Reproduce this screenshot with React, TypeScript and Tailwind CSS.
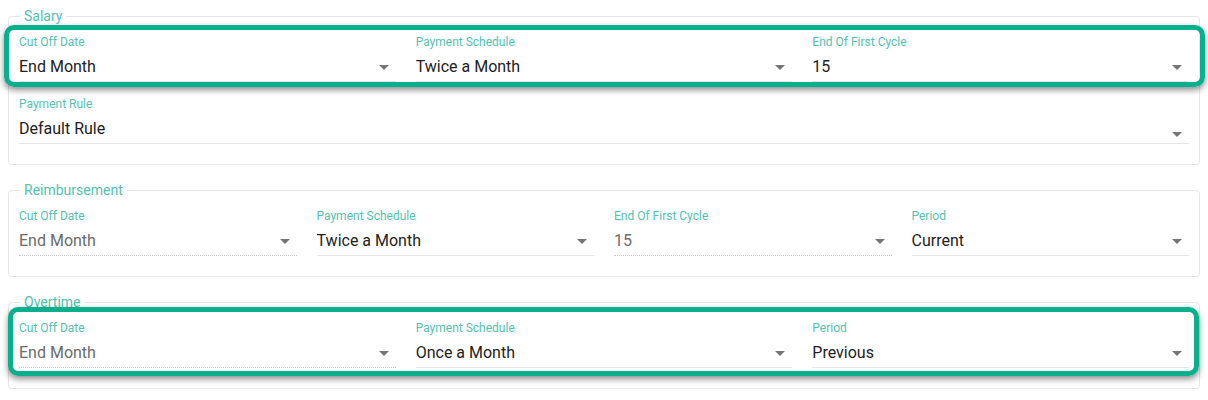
const teal = "text-[#52c2b0]";

type Field = { label: string; value: string; disabled?: boolean; low?: boolean };

function MenuDown({ low }: { low?: boolean }) {
  return (
    <svg
      viewBox="0 0 24 24"
      className={`h-6 w-6 shrink-0 fill-[#757575] ${low ? "translate-y-[5px]" : ""}`}
    >
      <path d="M7,10L12,15L17,10H7Z" />
    </svg>
  );
}

function Select({ label, value, disabled, low }: Field) {
  return (
    <div className="flex flex-col">
      <div className={`h-4 text-[12px] leading-4 ${teal}`}>{label}</div>
      <div
        className={`mt-[5px] flex items-start pb-[2px] border-b ${
          disabled ? "border-dotted border-[#c8c8c8]" : "border-solid border-[#e3e5ea]"
        }`}
      >
        <div
          className={`h-6 flex-1 truncate text-[16px] leading-6 ${
            disabled ? "text-[#6b6b6b]" : "text-[#222]"
          }`}
        >
          {value}
        </div>
        <MenuDown low={low} />
      </div>
    </div>
  );
}

function Group({ title, children }: { title: string; children: React.ReactNode }) {
  return (
    <fieldset className="rounded border border-[#e5e7eb] px-[10px] pt-[10px] pb-5">
      <legend className={`ml-px px-1 text-[14px] leading-4 ${teal}`}>{title}</legend>
      {children}
    </fieldset>
  );
}

function Highlight({ className }: { className: string }) {
  return (
    <div
      className={`pointer-events-none absolute rounded-[10px] border-[5px] border-[#0aaf8e] shadow-[0_3px_6px_rgba(0,0,0,0.45)] ${className}`}
    />
  );
}

export default function App() {
  return (
    <div
      className="min-h-[400px] w-[1208px] bg-white px-2 pt-2"
      style={{ fontFamily: "Roboto, 'Liberation Sans', sans-serif" }}
    >
      <Group title="Salary">
        <div className="relative grid grid-cols-3 gap-x-5">
          <Select label="Cut Off Date" value="End Month" />
          <Select label="Payment Schedule" value="Twice a Month" />
          <Select label="End Of First Cycle" value="15" />
          <Highlight className="-top-[9px] -bottom-[5px] -left-[15px] -right-[16px]" />
        </div>
        <div className="mt-[14px]">
          <Select label="Payment Rule" value="Default Rule" low />
        </div>
      </Group>

      <div className="mt-[17px]">
        <Group title="Reimbursement">
          <div className="grid grid-cols-4 gap-x-5">
            <Select label="Cut Off Date" value="End Month" disabled />
            <Select label="Payment Schedule" value="Twice a Month" />
            <Select label="End Of First Cycle" value="15" disabled />
            <Select label="Period" value="Current" />
          </div>
        </Group>
      </div>

      <div className="mt-[17px]">
        <Group title="Overtime">
          <div className="relative grid grid-cols-3 gap-x-5">
            <Select label="Cut Off Date" value="End Month" disabled />
            <Select label="Payment Schedule" value="Once a Month" />
            <Select label="Period" value="Previous" />
            <Highlight className="-top-[13px] -bottom-[8px] -left-[11px] -right-[10px]" />
          </div>
        </Group>
      </div>
    </div>
  );
}
